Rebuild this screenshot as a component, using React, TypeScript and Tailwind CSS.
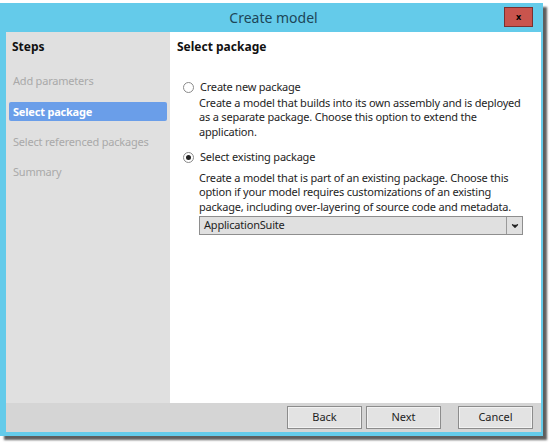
import { ChevronDown } from "lucide-react"

const font = { fontFamily: '"Noto Sans", "Open Sans", sans-serif' }

function Radio({ checked }: { checked?: boolean }) {
  return (
    <span className="flex h-[11px] w-[11px] items-center justify-center rounded-full border border-[#8a8a8a] bg-white">
      {checked && <span className="h-[5px] w-[5px] rounded-full bg-[#222]" />}
    </span>
  )
}

function FooterButton({ label }: { label: string }) {
  return (
    <button className="flex h-[23px] w-[75px] items-center justify-center border border-[#8c8c8c] bg-[#e3e3e3] text-[11px] text-[#1e1e1e] shadow-[inset_0_0_0_1px_#f2f2f2]">
      {label}
    </button>
  )
}

export default function App() {
  return (
    <div className="h-[448px] w-[550px] overflow-hidden bg-white pt-[3px]" style={font}>
      <div className="flex h-[433px] w-[543px] flex-col bg-[#64cbea] pb-[4px] pl-[6px] pr-[2px] shadow-[4px_4px_2px_rgba(40,40,40,0.75)]">
        <div className="relative flex h-[29px] shrink-0 items-center justify-center">
          <span className="text-[14px] text-[#1d4658]">Create model</span>
          <div className="absolute right-[8px] top-[4px] flex h-[20px] w-[29px] items-center justify-center border border-[#7a3030] bg-[#c9544d] text-[9px] font-bold text-black">
            x
          </div>
        </div>
        <div className="flex flex-1 flex-col bg-white">
          <div className="flex flex-1">
            <div className="w-[164px] bg-[#e0e0e0] pt-[6px]">
              <div className="px-[6px] text-[12px] font-bold text-[#111]">Steps</div>
              <div className="mt-[16px] flex flex-col gap-[12px] px-[3px] text-[11px] tracking-[-0.2px] text-[#a9a9a9]">
                <div className="px-[4px] leading-[18px]">Add parameters</div>
                <div className="rounded-[2px] bg-[#6a9ee9] px-[4px] font-bold leading-[19px] text-white">Select package</div>
                <div className="px-[4px] leading-[18px]">Select referenced packages</div>
                <div className="px-[4px] leading-[18px]">Summary</div>
              </div>
            </div>
            <div className="flex-1 pl-[7px] pt-[6px] text-[11px] tracking-[-0.2px] text-[#1e1e1e]">
              <div className="text-[12px] font-bold tracking-normal text-[#111]">Select package</div>
              <div className="mt-[23px] pl-[6px]">
                <div className="flex items-center gap-[6px]">
                  <Radio />
                  <span>Create new package</span>
                </div>
                <div className="ml-[16px] w-[326px] leading-[14.5px]">
                  Create a model that builds into its own assembly and is deployed as a separate package. Choose this option to extend the application.
                </div>
                <div className="mt-[10px] flex items-center gap-[6px]">
                  <Radio checked />
                  <span>Select existing package</span>
                </div>
                <div className="ml-[16px] mt-[5px] w-[326px] leading-[14.5px]">
                  Create a model that is part of an existing package. Choose this option if your model requires customizations of an existing package, including over-layering of source code and metadata.
                </div>
                <div className="ml-[16px] mt-[2px] flex h-[19px] w-[324px] items-center border border-[#8e8e8e] bg-[#e0e0e0]">
                  <span className="flex-1 px-[4px]">ApplicationSuite</span>
                  <span className="flex h-full w-[16px] items-center justify-center border-l border-[#9a9a9a]">
                    <ChevronDown className="h-[10px] w-[10px] fill-[#222] text-[#222]" strokeWidth={3} />
                  </span>
                </div>
              </div>
            </div>
          </div>
          <div className="flex h-[29px] shrink-0 items-center justify-end gap-[4px] bg-[#d5d5d5] pr-[8px]">
            <FooterButton label="Back" />
            <FooterButton label="Next" />
            <div className="w-[9px]" />
            <FooterButton label="Cancel" />
          </div>
        </div>
      </div>
    </div>
  )
}
